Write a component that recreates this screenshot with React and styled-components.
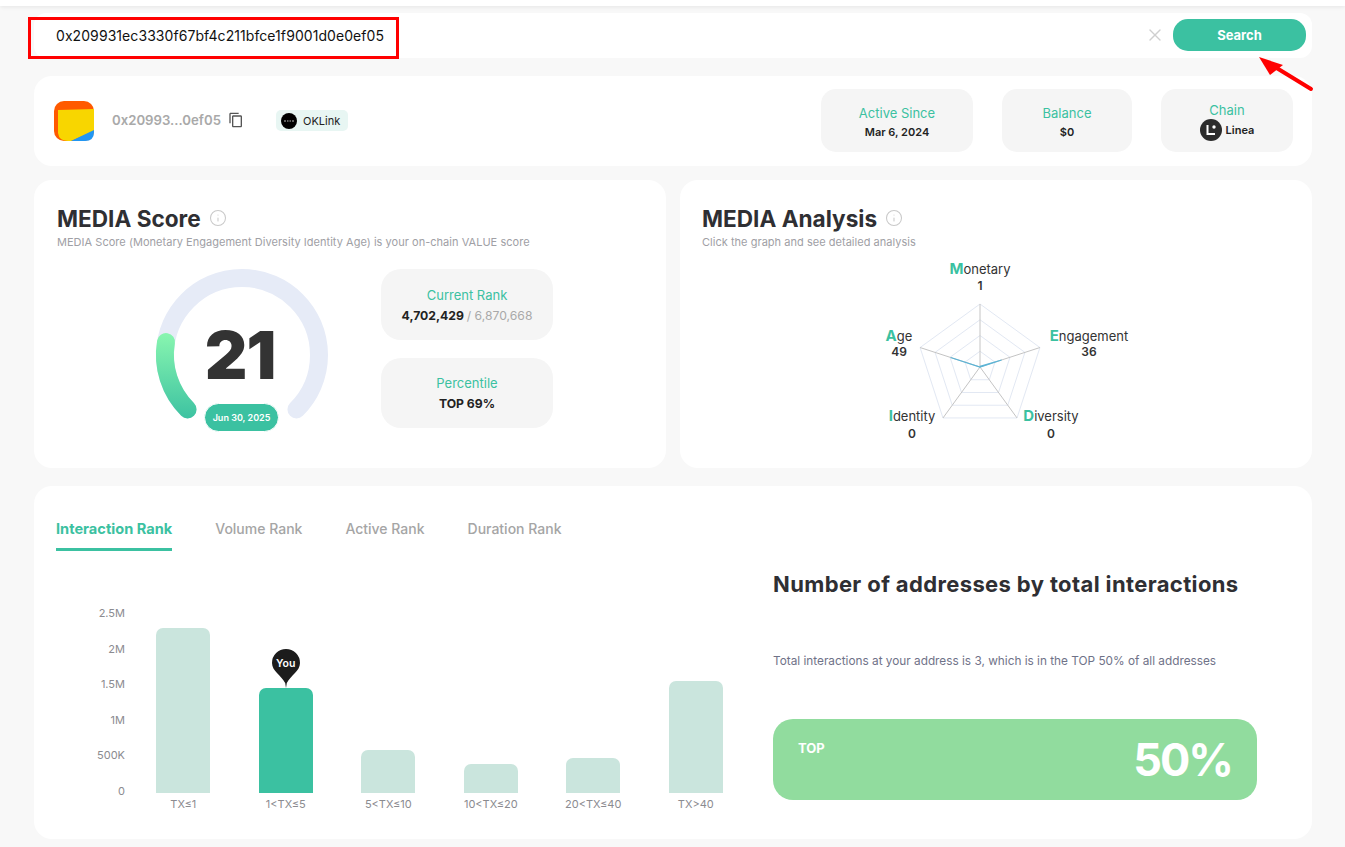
import styled, { createGlobalStyle } from "styled-components";
import { X, Info } from "lucide-react";
import { MdContentCopy } from "react-icons/md";

const GREEN = "#3bc1a1";

const GlobalStyle = createGlobalStyle`
	* { box-sizing: border-box; }
	body {
		margin: 0;
		background: #f8f8f8;
		color: #2f2f33;
		font-family: "Inter", "Noto Sans", sans-serif;
	}
`;

const Page = styled.div`
	width: 1345px;
	height: 847px;
	overflow: hidden;
`;

const TopBar = styled.div`
	height: 6px;
	background: #fff;
	box-shadow: 0 1px 4px rgba(0, 0, 0, 0.08);
`;

const Content = styled.div`
	padding: 7px 33px 0 34px;
	display: flex;
	flex-direction: column;
`;

const SearchBar = styled.div`
	position: relative;
	height: 45px;
	background: #fff;
	border-radius: 12px;
	display: flex;
	align-items: center;
	padding: 0 6px 0 22px;
	margin-bottom: 18px;
`;

const Address = styled.div`
	flex: 1;
	font-size: 14px;
	letter-spacing: 0.07px;
	color: #111;
`;

const ClearIcon = styled(X)`
	width: 20px;
	height: 20px;
	margin-top: -1px;
	color: #cfcfcf;
	margin-right: 8px;
`;

const SearchButton = styled.button`
	width: 133px;
	height: 32px;
	margin-top: -1px;
	border: none;
	border-radius: 15px;
	background: ${GREEN};
	color: #fff;
	font: 700 13px "Inter", sans-serif;
`;

const RedBox = styled.div`
	position: absolute;
	left: -6px;
	top: 4px;
	width: 371px;
	height: 42px;
	border: 3px solid #f00;
	pointer-events: none;
`;

const RedArrow = styled.svg`
	position: absolute;
	left: 1216px;
	top: 36px;
	width: 70px;
	height: 50px;
	pointer-events: none;
`;

const Card = styled.div`
	background: #fff;
	border-radius: 18px;
`;

const ProfileCard = styled(Card)`
	height: 90px;
	display: flex;
	align-items: center;
	padding: 0 19px 0 20px;
	margin-bottom: 14px;
`;

const ShortAddress = styled.div`
	margin-left: 18px;
	margin-top: -2px;
	font-size: 13.2px;
	font-weight: 600;
	color: #a9a9a9;
`;

const CopyIcon = styled(MdContentCopy)`
	width: 16px;
	height: 16px;
	margin-left: 7px;
	margin-top: -2px;
	color: #555;
`;

const SourceTag = styled.div`
	margin-left: 32px;
	margin-top: -1px;
	height: 21px;
	width: 72px;
	border-radius: 5px;
	background: #e8f6f3;
	display: flex;
	align-items: center;
	gap: 6px;
	padding-left: 5px;
	font-size: 11px;
	color: #222;
`;

const Stats = styled.div`
	margin-left: auto;
	margin-top: -2px;
	display: flex;
	gap: 29px;
`;

const StatBox = styled.div`
	width: ${(p) => p.$w}px;
	height: 63px;
	padding-top: 3px;
	background: #f5f5f5;
	border-radius: 15px;
	display: flex;
	flex-direction: column;
	align-items: center;
	justify-content: center;
	gap: ${(p) => p.$gap || 4}px;
`;

const StatLabel = styled.div`
	font-size: 13px;
	line-height: 16px;
	color: ${GREEN};
`;

const StatValue = styled.div`
	display: flex;
	align-items: center;
	gap: 4px;
	font-size: 11px;
	line-height: 14px;
	font-weight: 600;
	color: #222;
`;

const Row = styled.div`
	display: grid;
	grid-template-columns: 632px 632px;
	gap: 14px;
	margin-bottom: 18px;
`;

const PanelCard = styled(Card)`
	height: 288px;
	padding: 24px 22px 0 ${(p) => p.$left}px;
`;

const TitleLine = styled.div`
	display: flex;
	align-items: center;
	gap: 8px;
	height: 28px;
`;

const Title = styled.h2`
	margin: 0;
	font-size: 22.6px;
	font-weight: 700;
	color: #2f2f33;
`;

const InfoIcon = styled(Info)`
	width: 18px;
	height: 18px;
	color: #c9c9c9;
`;

const Subtitle = styled.div`
	margin-top: 3px;
	font-size: 11px;
	letter-spacing: 0.03px;
	line-height: 14px;
	color: #a0a0a5;
`;

const ScoreBody = styled.div`
	margin-top: 20px;
	display: flex;
`;

const Gauge = styled.div`
	position: relative;
	width: 176px;
	height: 162px;
	margin-left: 96px;
	margin-right: 52px;
`;

const GaugeScore = styled.div`
	position: absolute;
	left: -2px;
	right: 0;
	top: 44px;
	text-align: center;
	font-size: 66px;
	line-height: 84px;
	font-weight: 900;
	letter-spacing: -1px;
	color: #333;
`;

const DateBadge = styled.div`
	position: absolute;
	left: 51px;
	top: 134px;
	width: 75px;
	height: 29px;
	border: 1px solid #fff;
	border-radius: 15px;
	background: ${GREEN};
	color: #fff;
	display: flex;
	align-items: center;
	justify-content: center;
	font-size: 9px;
	font-weight: 600;
`;

const RankColumn = styled.div`
	display: flex;
	flex-direction: column;
	gap: 18px;
`;

const RankBox = styled.div`
	width: 172px;
	height: ${(p) => p.$h}px;
	padding-top: 1px;
	background: #f5f5f5;
	border-radius: 20px;
	display: flex;
	flex-direction: column;
	align-items: center;
	justify-content: center;
	gap: 5px;
`;

const RankValue = styled.div`
	font-size: 12.2px;
	line-height: 16px;
	font-weight: 700;
	color: #222;
`;

const RankTotal = styled.span`
	font-weight: 400;
	color: #a9a9a9;
`;

const Radar = styled.svg`
	display: block;
	width: 588px;
	height: 198px;
	margin-top: -1px;
	font-family: "Inter", sans-serif;
`;

const RadarName = styled.text`
	font-size: 13px;
	font-weight: 400;
	fill: #333;
	text-anchor: middle;
`;

const RadarInitial = styled.tspan`
	font-size: 15px;
	font-weight: 700;
	fill: ${GREEN};
`;

const RadarValue = styled.text`
	font-size: 12px;
	font-weight: 600;
	fill: #333;
	text-anchor: middle;
`;

const RankCard = styled(Card)`
	height: 353px;
	padding: 34px 0 0 22px;
`;

const Tabs = styled.div`
	display: flex;
	gap: 43px;
`;

const Tab = styled.div`
	height: 31px;
	line-height: 18px;
	font-size: ${(p) => (p.$active ? 14.6 : 14)}px;
	font-weight: ${(p) => (p.$active ? 700 : 500)};
	color: ${(p) => (p.$active ? GREEN : "#a5a5a5")};
	border-bottom: 3px solid ${(p) => (p.$active ? GREEN : "transparent")};
`;

const RankBody = styled.div`
	display: flex;
`;

const Chart = styled.div`
	display: flex;
	margin-top: 55px;
	margin-right: 26px;
`;

const YAxis = styled.div`
	width: 76px;
	height: 192px;
	padding-right: 7px;
	display: flex;
	flex-direction: column;
	justify-content: space-between;
	align-items: flex-end;
	font-size: 11px;
	line-height: 14px;
	color: #8b8b90;
`;

const Slot = styled.div`
	width: 102.5px;
	display: flex;
	flex-direction: column;
	align-items: center;
`;

const Plot = styled.div`
	height: 187px;
	display: flex;
	align-items: flex-end;
`;

const Bar = styled.div`
	position: relative;
	width: 54px;
	height: ${(p) => p.$h}px;
	border-radius: 7px 7px 0 0;
	background: ${(p) => (p.$mine ? GREEN : "#cae5dd")};
`;

const Pin = styled.div`
	position: absolute;
	left: 13px;
	bottom: 100%;
	width: 28px;
	height: 39px;
`;

const PinLabel = styled.span`
	position: absolute;
	left: 0;
	right: 0;
	top: 8px;
	text-align: center;
	font-size: 10.5px;
	line-height: 14px;
	font-weight: 600;
	color: #fff;
`;

const TickLabel = styled.div`
	margin-top: 4px;
	font-size: 11px;
	line-height: 14px;
	color: #8b8b90;
`;

const Summary = styled.div`
	width: 484px;
	padding-top: 19px;
`;

const SummaryTitle = styled.h3`
	margin: 0;
	font-size: 22px;
	line-height: 28px;
	font-weight: 700;
	letter-spacing: 0.37px;
	white-space: nowrap;
	color: #2f2f33;
`;

const SummaryText = styled.div`
	margin-top: 55px;
	font-size: 11.8px;
	line-height: 16px;
	color: #6f7288;
`;

const TopBox = styled.div`
	margin-top: 50px;
	height: 81px;
	border-radius: 20px;
	background: #91dc9e;
	color: #fff;
	display: flex;
	justify-content: space-between;
	padding: 20px 25px 0 25px;
`;

const TopLabel = styled.div`
	margin-top: 1px;
	font-size: 13px;
	line-height: 17px;
	font-weight: 700;
`;

const TopValue = styled.div`
	font-size: 45px;
	line-height: 42px;
	font-weight: 700;
	letter-spacing: -2px;
`;

const PROFILE_STATS = [
	{ label: "Active Since", value: "Mar 6, 2024", w: 152 },
	{ label: "Balance", value: "$0", w: 130 },
];

const BARS = [
	{ label: "TX≤1", h: 165 },
	{ label: "1<TX≤5", h: 105, mine: true },
	{ label: "5<TX≤10", h: 43 },
	{ label: "10<TX≤20", h: 29 },
	{ label: "20<TX≤40", h: 35 },
	{ label: "TX>40", h: 112 },
];

const TICKS = ["2.5M", "2M", "1.5M", "1M", "500K", "0"];

// radar centre in svg coordinates, axes in order M E D I A
const CX = 278;
const CY = 119;
const R = 63;
const AXES = [0, 1, 2, 3, 4].map((i) => {
	const a = (Math.PI * 2 * i) / 5 - Math.PI / 2;
	return [Math.cos(a), Math.sin(a)];
});
const ring = (k) =>
	AXES.map(([x, y]) => `${CX + x * R * k},${CY + y * R * k}`).join(" ");
const VALUES = [0.01, 0.36, 0, 0, 0.49];

const RADAR_LABELS = [
	{ initial: "M", rest: "onetary", value: "1", x: 278, y: 26, vy: 42 },
	{ initial: "E", rest: "ngagement", value: "36", x: 387, y: 93, vy: 108 },
	{ initial: "D", rest: "iversity", value: "0", x: 349, y: 173, vy: 190 },
	{ initial: "I", rest: "dentity", value: "0", x: 210, y: 173, vy: 190 },
	{ initial: "A", rest: "ge", value: "49", x: 197, y: 93, vy: 108 },
];

const Logo = () => (
	<svg width="40" height="40" viewBox="0 0 40 40">
		<rect width="40" height="40" rx="10" fill="#ff5a00" />
		<path d="M4 9 L40 8 V30 L17 40 H14 Q5 40 4 32 Z" fill="#f8d600" />
		<path d="M17 40 L40 29 V31 Q40 40 31 40 Z" fill="#2196f3" />
	</svg>
);

const OkLinkMark = () => (
	<svg width="16" height="16" viewBox="0 0 16 16">
		<circle cx="8" cy="8" r="8" fill="#000" />
		<path d="M3 7.5h2v1H3zM6 7.5h1.5v1H6zM8.5 7.5h1.5v1H8.5zM11 7.5h2v1h-2z" fill="#bbb" />
	</svg>
);

const LineaMark = () => (
	<svg width="22" height="22" viewBox="0 0 22 22">
		<circle cx="11" cy="11" r="11" fill="#2c2c2c" />
		<path d="M6.5 6h2v8h6.5v2H6.5z" fill="#fff" />
		<circle cx="14" cy="8" r="1.7" fill="#fff" />
	</svg>
);

const ScoreGauge = () => (
	<Gauge>
		<svg width="176" height="162" viewBox="0 0 176 162">
			<defs>
				<linearGradient id="gaugeFill" gradientUnits="userSpaceOnUse" x1="0" y1="62" x2="0" y2="152">
					<stop offset="0" stopColor="#8af7b0" />
					<stop offset="1" stopColor="#3bc1a1" />
				</linearGradient>
			</defs>
			<path
				d="M34.55 140.45 A77 77 0 1 1 143.45 140.45"
				fill="none"
				stroke="#e6ebf7"
				strokeWidth="18"
				strokeLinecap="round"
			/>
			<path
				d="M34.55 140.45 A77 77 0 0 1 13 73"
				fill="none"
				stroke="url(#gaugeFill)"
				strokeWidth="18"
				strokeLinecap="round"
			/>
		</svg>
		<GaugeScore>21</GaugeScore>
		<DateBadge>Jun 30, 2025</DateBadge>
	</Gauge>
);

const RadarChart = () => (
	<Radar viewBox="0 0 588 198">
		{[1, 0.75, 0.5, 0.25].map((k) => (
			<polygon key={k} points={ring(k)} fill="none" stroke="#e2e8f3" />
		))}
		{AXES.map(([x, y], i) => (
			<line key={i} x1={CX} y1={CY} x2={CX + x * R} y2={CY + y * R} stroke="#c4c4c4" />
		))}
		<polyline
			points={AXES.map(([x, y], i) => `${CX + x * R * VALUES[i]},${CY + y * R * VALUES[i]}`).join(" ")}
			fill="none"
			stroke="#5bb4d6"
			strokeWidth="1.2"
		/>
		{RADAR_LABELS.map((l) => (
			<g key={l.initial}>
				<RadarName x={l.x} y={l.y}>
					<RadarInitial>{l.initial}</RadarInitial>
					{l.rest}
				</RadarName>
				<RadarValue x={l.x} y={l.vy}>
					{l.value}
				</RadarValue>
			</g>
		))}
	</Radar>
);

const App = () => {
	return (
		<Page>
			<GlobalStyle />
			<TopBar />
			<Content>
				<SearchBar>
					<Address>0x209931ec3330f67bf4c211bfce1f9001d0e0ef05</Address>
					<ClearIcon strokeWidth={1.6} />
					<SearchButton>Search</SearchButton>
					<RedBox />
					<RedArrow viewBox="0 0 70 50">
						<path d="M61 40 L25 18" stroke="#f00" strokeWidth="4" strokeLinecap="round" />
						<path d="M9 8 L33 16 L20 26 Z" fill="#f00" />
					</RedArrow>
				</SearchBar>

				<ProfileCard>
					<Logo />
					<ShortAddress>0x20993...0ef05</ShortAddress>
					<CopyIcon />
					<SourceTag>
						<OkLinkMark />
						OKLink
					</SourceTag>
					<Stats>
						{PROFILE_STATS.map((s) => (
							<StatBox key={s.label} $w={s.w}>
								<StatLabel>{s.label}</StatLabel>
								<StatValue>{s.value}</StatValue>
							</StatBox>
						))}
						<StatBox $w={132} $gap={1}>
							<StatLabel>Chain</StatLabel>
							<StatValue>
								<LineaMark />
								Linea
							</StatValue>
						</StatBox>
					</Stats>
				</ProfileCard>

				<Row>
					<PanelCard $left={23}>
						<TitleLine>
							<Title>MEDIA Score</Title>
							<InfoIcon strokeWidth={1.4} />
						</TitleLine>
						<Subtitle>MEDIA Score (Monetary Engagement Diversity Identity Age) is your on-chain VALUE score</Subtitle>
						<ScoreBody>
							<ScoreGauge />
							<RankColumn>
								<RankBox $h={71}>
									<StatLabel>Current Rank</StatLabel>
									<RankValue>
										4,702,429 <RankTotal>/ 6,870,668</RankTotal>
									</RankValue>
								</RankBox>
								<RankBox $h={70}>
									<StatLabel>Percentile</StatLabel>
									<RankValue>TOP 69%</RankValue>
								</RankBox>
							</RankColumn>
						</ScoreBody>
					</PanelCard>
					<PanelCard $left={22}>
						<TitleLine>
							<Title>MEDIA Analysis</Title>
							<InfoIcon strokeWidth={1.4} />
						</TitleLine>
						<Subtitle>Click the graph and see detailed analysis</Subtitle>
						<RadarChart />
					</PanelCard>
				</Row>

				<RankCard>
					<Tabs>
						<Tab $active>Interaction Rank</Tab>
						<Tab>Volume Rank</Tab>
						<Tab>Active Rank</Tab>
						<Tab>Duration Rank</Tab>
					</Tabs>
					<RankBody>
						<Chart>
							<YAxis>
								{TICKS.map((t) => (
									<span key={t}>{t}</span>
								))}
							</YAxis>
							{BARS.map((b) => (
								<Slot key={b.label}>
									<Plot>
										<Bar $h={b.h} $mine={b.mine}>
											{b.mine && (
												<Pin>
													<svg width="28" height="39" viewBox="0 0 28 39">
														<path
															d="M14 0 A14 14 0 0 1 28 14 C28 22 19 26 14.8 34 L14 39 L13.2 34 C9 26 0 22 0 14 A14 14 0 0 1 14 0 Z"
															fill="#1c1c1c"
														/>
													</svg>
													<PinLabel>You</PinLabel>
												</Pin>
											)}
										</Bar>
									</Plot>
									<TickLabel>{b.label}</TickLabel>
								</Slot>
							))}
						</Chart>
						<Summary>
							<SummaryTitle>Number of addresses by total interactions</SummaryTitle>
							<SummaryText>Total interactions at your address is 3, which is in the TOP 50% of all addresses</SummaryText>
							<TopBox>
								<TopLabel>TOP</TopLabel>
								<TopValue>50%</TopValue>
							</TopBox>
						</Summary>
					</RankBody>
				</RankCard>
			</Content>
		</Page>
	);
};

export default App;
